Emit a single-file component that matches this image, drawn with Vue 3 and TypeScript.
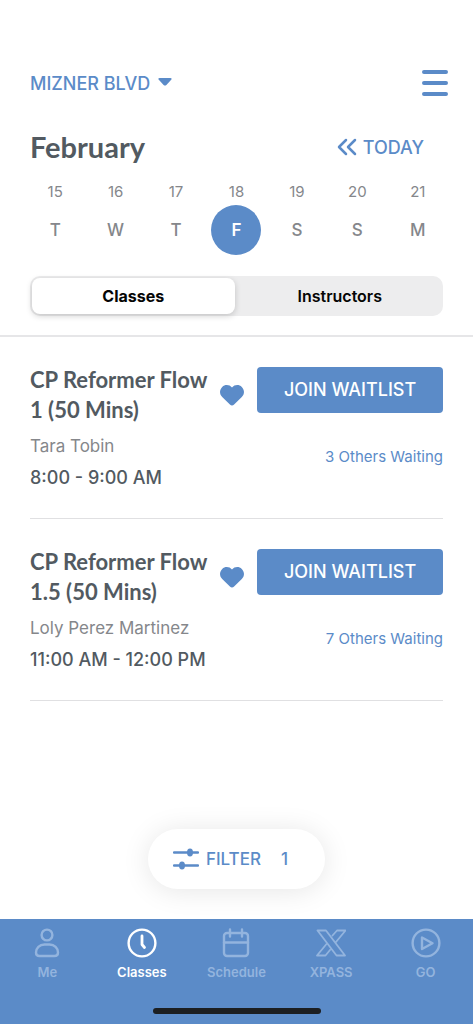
<script setup lang="ts">
import { ref } from 'vue'

interface Day {
  date: number
  letter: string
}

interface StudioClass {
  id: number
  title: string
  instructor: string
  time: string
  waiting: number
}

const days: Day[] = [
  { date: 15, letter: 'T' },
  { date: 16, letter: 'W' },
  { date: 17, letter: 'T' },
  { date: 18, letter: 'F' },
  { date: 19, letter: 'S' },
  { date: 20, letter: 'S' },
  { date: 21, letter: 'M' },
]

const classes: StudioClass[] = [
  { id: 1, title: 'CP Reformer Flow 1 (50 Mins)', instructor: 'Tara Tobin', time: '8:00 - 9:00 AM', waiting: 3 },
  { id: 2, title: 'CP Reformer Flow 1.5 (50 Mins)', instructor: 'Loly Perez Martinez', time: '11:00 AM - 12:00 PM', waiting: 7 },
]

const views = ['Classes', 'Instructors']
const tabs = ['Me', 'Classes', 'Schedule', 'XPASS', 'GO']

const selectedDate = ref(18)
const activeView = ref('Classes')
const activeTab = ref('Classes')
</script>

<template>
  <div class="screen">
    <header class="header">
      <div class="top-row">
        <button class="location" type="button">
          MIZNER BLVD
          <svg width="14" height="8" viewBox="0 0 14 8" aria-hidden="true">
            <path d="M1.6 0h10.8c1.3 0 1.6 1 .8 1.8L8.4 6.9c-.8.9-2 .9-2.8 0L.8 1.8C0 1 .3 0 1.6 0z" fill="currentColor" />
          </svg>
        </button>
        <button class="menu" type="button" aria-label="Menu">
          <svg width="28" height="28" viewBox="0 0 28 28" aria-hidden="true">
            <path d="M3 3h22M3 14h22M3 25h22" stroke="currentColor" stroke-width="4" stroke-linecap="round" />
          </svg>
        </button>
      </div>

      <div class="month-row">
        <h1 class="month">February</h1>
        <button class="today" type="button">
          <svg width="20" height="18" viewBox="0 0 20 18" fill="none" aria-hidden="true">
            <path d="M9 2L2 9l7 7M18 2l-7 7 7 7" stroke="currentColor" stroke-width="2.5" stroke-linecap="round" stroke-linejoin="round" />
          </svg>
          TODAY
        </button>
      </div>

      <div class="week">
        <button
          v-for="day in days"
          :key="day.date"
          class="day"
          type="button"
          :aria-pressed="day.date === selectedDate"
          @click="selectedDate = day.date"
        >
          <span class="date">{{ day.date }}</span>
          <span class="letter" :class="{ selected: day.date === selectedDate }">{{ day.letter }}</span>
        </button>
      </div>

      <div class="segments">
        <button
          v-for="view in views"
          :key="view"
          class="segment"
          :class="{ active: view === activeView }"
          type="button"
          :aria-pressed="view === activeView"
          @click="activeView = view"
        >
          {{ view }}
        </button>
      </div>
    </header>

    <main class="list">
      <article v-for="item in classes" :key="item.id" class="card">
        <div class="info">
          <h2 class="title">{{ item.title }}</h2>
          <p class="instructor">{{ item.instructor }}</p>
          <p class="time">{{ item.time }}</p>
        </div>
        <button class="heart" type="button" aria-label="Favorite">
          <svg width="24" height="21" viewBox="0 0 24 21" aria-hidden="true">
            <path d="M12 2.5C14.5-.5 19-.8 21.8 1.9c2.9 2.9 2.9 7.200 0 10l-7.700 7.600c-1.300 1.300-2.900 1.300-4.200 0L2.200 11.900c-2.900-2.800-2.900-7.100 0-10C5-.8 9.500-.5 12 2.500z" fill="currentColor" />
          </svg>
        </button>
        <div class="actions">
          <button class="join" type="button">JOIN WAITLIST</button>
          <p class="waiting">{{ item.waiting }} Others Waiting</p>
        </div>
      </article>
    </main>

    <button class="filter" type="button">
      <svg width="26" height="22" viewBox="0 0 26 22" aria-hidden="true">
        <path d="M1 4.5h24M1 17.5h24" stroke="currentColor" stroke-width="2.4" stroke-linecap="round" />
        <ellipse cx="17" cy="4.5" rx="3" ry="4" fill="currentColor" />
        <ellipse cx="9" cy="17.5" rx="3" ry="4" fill="currentColor" />
      </svg>
      <span>FILTER</span>
      <span class="count">1</span>
    </button>

    <nav class="tab-bar">
      <div class="tabs">
        <button
          v-for="tab in tabs"
          :key="tab"
          class="tab"
          :class="{ current: tab === activeTab }"
          type="button"
          @click="activeTab = tab"
        >
          <svg class="tab-icon" viewBox="0 0 30 30" aria-hidden="true">
            <template v-if="tab === 'Me'">
              <circle cx="15" cy="7" r="5.4" />
              <path d="M12.500 16.500h5c5 0 8.500 3.500 8.500 8 0 2.300-1.200 3.500-3.500 3.500h-15C5.200 28 4 26.800 4 24.500c0-4.500 3.500-8 8.500-8z" />
            </template>
            <template v-else-if="tab === 'Classes'">
              <circle cx="15" cy="15" r="13.4" />
              <path d="M15 8v8.500l2.500 3" stroke-width="2.8" />
            </template>
            <template v-else-if="tab === 'Schedule'">
              <rect x="3" y="5" width="24" height="23" rx="3" />
              <path d="M3 14.500h24M9 1.500v7M21 1.500v7" />
            </template>
            <template v-else-if="tab === 'XPASS'">
              <path d="M1.500 2.500H10L29 27.500h-8.500zM16.500 7.500l4.500-5h8.500L20 14M10.500 16L1 27.500h8.500l4.500-5.500" stroke-width="1.8" />
            </template>
            <template v-else>
              <circle cx="15" cy="15" r="13.4" />
              <path d="M11 9.500v11.500L21.500 15.200z" />
            </template>
          </svg>
          <span>{{ tab }}</span>
        </button>
      </div>
      <div class="home-indicator"></div>
    </nav>
  </div>
</template>

<style>
body {
  margin: 0;
  background: #fff;
}
</style>

<style scoped>
.screen {
  display: flex;
  flex-direction: column;
  min-height: 100vh;
  background: #fff;
  color: #525a61;
  font-family: Inter, "Liberation Sans", sans-serif;
}

button {
  margin: 0;
  padding: 0;
  border: 0;
  background: none;
  color: inherit;
  font: inherit;
  cursor: pointer;
}

svg {
  display: block;
}

h1,
h2,
p {
  margin: 0;
}

.header {
  padding: 68px 30px 19px;
  border-bottom: 2px solid #e6e6e8;
}

.top-row,
.month-row {
  display: flex;
  align-items: center;
  justify-content: space-between;
}

.location {
  display: flex;
  align-items: center;
  gap: 8px;
  padding-top: 2px;
  color: #5b8bc8;
  font-size: 18px;
  font-weight: 500;
  line-height: 28px;
}

.location svg {
  margin-bottom: 4px;
}

.menu {
  margin-right: -6px;
  color: #5b8bc8;
}

.month-row {
  margin-top: 30px;
  padding-right: 19px;
}

.month {
  font-family: Lato, "Open Sans", sans-serif;
  font-size: 29px;
  font-weight: 700;
  line-height: 38px;
}

.today {
  display: flex;
  align-items: center;
  gap: 6px;
  color: #5b8bc8;
  font-size: 18px;
  font-weight: 500;
}

.week {
  display: grid;
  grid-template-columns: repeat(7, 1fr);
  margin: 16px -5px 0;
  color: #85878b;
}

.day {
  display: flex;
  flex-direction: column;
  align-items: center;
  gap: 3px;
}

.date {
  font-size: 15px;
  line-height: 20px;
}

.letter {
  width: 50px;
  border-radius: 50%;
  font-size: 17px;
  font-weight: 500;
  line-height: 50px;
}

.selected {
  background: #5b8bc8;
  color: #fff;
  font-weight: 600;
}

.segments {
  display: flex;
  gap: 4px;
  margin-top: 21px;
  padding: 2px;
  border-radius: 10px;
  background: #ededee;
}

.segment {
  flex: 1;
  border-radius: 8px;
  color: #050505;
  font-size: 16px;
  font-weight: 600;
  line-height: 36px;
}

.active {
  background: #fff;
  box-shadow: 0 2px 6px rgba(0, 0, 0, 0.18);
  font-weight: 700;
}

.list {
  padding: 0 30px;
}

.card {
  display: flex;
  align-items: flex-start;
  padding: 28px 0 24px;
  border-bottom: 1px solid #e0e0e2;
}

.info {
  flex: 1;
  min-width: 0;
}

.title {
  font-family: Lato, "Open Sans", sans-serif;
  font-size: 22px;
  font-weight: 700;
  line-height: 30px;
}

.instructor {
  margin-top: 6px;
  color: #85878b;
  font-size: 17px;
  line-height: 30px;
}

.time {
  font-size: 18px;
  font-weight: 500;
  line-height: 33px;
  white-space: nowrap;
}

.heart {
  margin: 20px 13px 0 8px;
  color: #5b8bc8;
}

.actions {
  width: 45%;
  padding-top: 2px;
  text-align: right;
}

.join {
  width: 100%;
  border-radius: 4px;
  background: #5b8bc8;
  color: #fff;
  font-size: 18px;
  font-weight: 500;
  line-height: 46px;
}

.waiting {
  margin-top: 33px;
  color: #5b8bc8;
  font-size: 15px;
  line-height: 22px;
}

.filter {
  display: flex;
  align-items: center;
  align-self: center;
  gap: 7px;
  margin: auto 0 30px;
  padding: 0 37px 0 25px;
  border-radius: 30px;
  background: #fff;
  box-shadow: 0 2px 28px rgba(0, 0, 0, 0.1);
  color: #5b8bc8;
  font-size: 17px;
  font-weight: 500;
  line-height: 60px;
}

.count {
  margin-left: 13px;
}

.tab-bar {
  display: flex;
  flex-direction: column;
  background: #5b8bc8;
}

.tabs {
  display: grid;
  grid-template-columns: repeat(5, 1fr);
  padding-top: 9px;
}

.tab {
  display: flex;
  flex-direction: column;
  align-items: center;
  gap: 4px;
  color: #93b4de;
  font-size: 13px;
  font-weight: 600;
  line-height: 20px;
}

.current {
  color: #fff;
}

.tab-icon {
  width: 30px;
  height: 30px;
  fill: none;
  stroke: currentColor;
  stroke-width: 2.4;
  stroke-linecap: round;
  stroke-linejoin: round;
}

.home-indicator {
  align-self: center;
  width: 168px;
  height: 6px;
  margin: 26px 0 10px;
  border-radius: 3px;
  background: #1c1f22;
}
</style>
